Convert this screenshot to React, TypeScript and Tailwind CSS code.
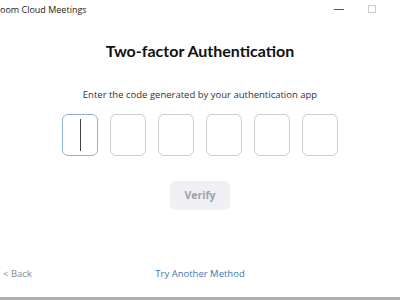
export default function App() {
  const boxes = [0, 1, 2, 3, 4, 5];

  return (
    <div
      className="w-[400px] h-[300px] bg-white flex flex-col overflow-hidden"
      style={{ fontFamily: '"Open Sans", "Noto Sans", sans-serif' }}
    >
      {/* title bar */}
      <div className="h-[18px] flex items-center justify-between">
        <span className="text-[9px] text-[#222] leading-none">
          oom Cloud Meetings
        </span>
        <div className="flex items-center gap-[24px] pr-[24px]">
          <span className="block w-[10px] h-px bg-[#555]" />
          <span className="block w-[8px] h-[8px] border border-[#ccc]" />
        </div>
      </div>

      <h1
        className="mt-[22px] text-center text-[16px] font-bold text-[#111] leading-[22px]"
        style={{ fontFamily: 'Lato, "Open Sans", sans-serif' }}
      >
        Two-factor Authentication
      </h1>

      <p className="mt-[26px] text-center text-[9.5px] text-[#333] leading-[14px]">
        Enter the code generated by your authentication app
      </p>

      <div className="mt-[12px] flex justify-center gap-[12px]">
        {boxes.map((i) => (
          <div
            key={i}
            className={
              i === 0
                ? "w-[36px] h-[42px] rounded-[6px] border border-[#8fb0d6] flex items-center justify-center"
                : "w-[36px] h-[42px] rounded-[6px] border border-[#cfcfcf]"
            }
          >
            {i === 0 && <span className="block w-px h-[32px] bg-[#444]" />}
          </div>
        ))}
      </div>

      <div className="mt-[25px] flex justify-center">
        <button className="w-[60px] h-[29px] rounded-[6px] bg-[#efeff4] text-[10.5px] font-bold text-[#a0a0a8]">
          Verify
        </button>
      </div>

      <div className="mt-auto relative h-[30px] flex items-start justify-center">
        <span className="absolute left-[3px] top-0 text-[9.5px] text-[#888] leading-[14px]">
          &lt; Back
        </span>
        <span className="text-[9.5px] text-[#3e78b8] leading-[14px]">
          Try Another Method
        </span>
      </div>
      <div className="h-[3px] bg-[#b0b0b0]" />
    </div>
  );
}
